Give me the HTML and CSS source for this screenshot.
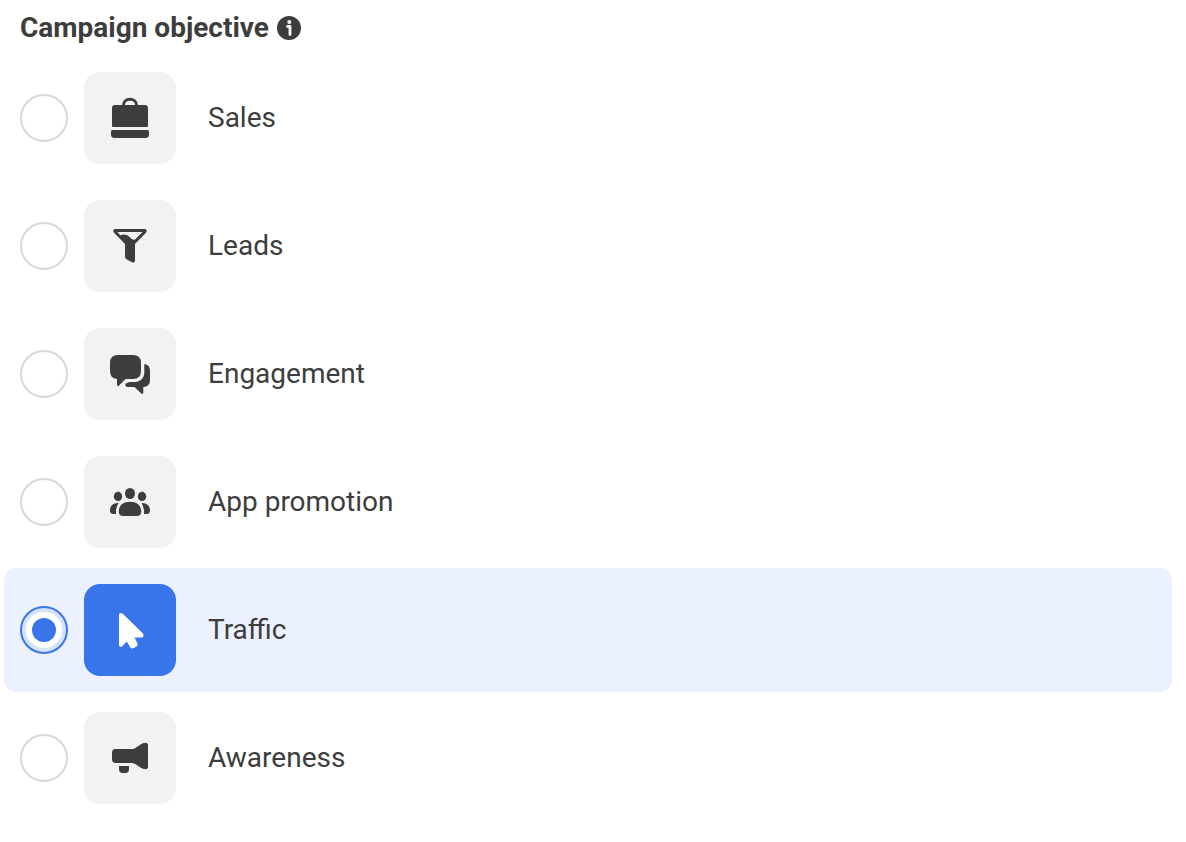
FILE: index.html
```html
<!DOCTYPE html>
<html lang="en">
<head>
<meta charset="utf-8">
<meta name="viewport" content="width=device-width, initial-scale=1">
<title>Campaign objective</title>
<link rel="stylesheet" href="styles.css">
</head>
<body>
<fieldset class="objectives">
  <legend class="title">Campaign objective
    <button class="info" type="button" aria-label="About campaign objectives">
      <svg viewBox="0 0 24 24" aria-hidden="true"><circle cx="12" cy="12" r="12" fill="#3d3d3d"/><circle cx="12.300" cy="6" r="2" fill="#fff"/><path d="M10.500 10.500H13V18.500" fill="none" stroke="#fff" stroke-width="2.800" stroke-linecap="round" stroke-linejoin="round"/></svg>
    </button>
  </legend>
  <div class="list">
    <label class="option">
      <input class="radio" type="radio" name="objective" value="sales">
      <span class="tile"><svg class="icon" viewBox="0 0 60 60" aria-hidden="true"><path d="M15 17H45Q48 17 48 20V38Q48 39 47 39H13Q12 39 12 38V20Q12 17 15 17ZM12.500 42H47.500Q49 42 49 43.500V46.500Q49 50 45.500 50H14.500Q11 50 11 46.500V43.500Q11 42 12.500 42Z"/><path d="M23.300 18C23.300 9 36.700 9 36.700 18" fill="none" stroke="currentColor" stroke-width="3"/></svg></span>
      <span class="name">Sales</span>
    </label>
    <label class="option">
      <input class="radio" type="radio" name="objective" value="leads">
      <span class="tile"><svg class="icon" viewBox="0 0 60 60" aria-hidden="true"><path fill-rule="evenodd" d="M15 13H45Q46.700 13 46.700 14.800Q46.700 16 45.700 17L35 28V44Q35 47.500 32 46.300L26.500 43.300Q25 42.400 25 40.500V28L14.300 17Q13.300 16 13.300 14.800Q13.300 13 15 13ZM17.300 16L20.300 19.200C24 18 27 18.500 29.500 21C31.500 23.200 33.500 24.600 35.300 23.200L42.500 16Z"/></svg></span>
      <span class="name">Leads</span>
    </label>
    <label class="option">
      <input class="radio" type="radio" name="objective" value="engagement">
      <span class="tile"><svg class="icon" viewBox="0 0 60 60" aria-hidden="true"><path d="M18 11H33Q41 11 41 19V27Q41 35 33 35H25.500L19 41.500Q17 43 17 40.500V35Q10 34.500 10 27V19Q10 11 18 11Z"/><path d="M44.300 20Q50 20.500 50 27V36Q50 42.700 43.300 43V48.500Q43.300 51 41 49.300L34.500 43H27.500Q26 43 25.300 41.300Q25 39.500 27 39L29.500 38H35C41 37.500 44.300 34 44.300 28Z"/></svg></span>
      <span class="name">Engagement</span>
    </label>
    <label class="option">
      <input class="radio" type="radio" name="objective" value="app-promotion">
      <span class="tile"><svg class="icon" viewBox="0 0 60 60" aria-hidden="true"><ellipse cx="30" cy="21.500" rx="5" ry="5.600"/><ellipse cx="18" cy="24.400" rx="4.200" ry="4.600"/><ellipse cx="42" cy="24.400" rx="4.200" ry="4.600"/><path d="M30 29.800C37 29.800 41.200 33.500 41.200 39.500Q41.200 44 36.500 44H23.500Q18.800 44 18.800 39.500C18.800 33.500 23 29.800 30 29.800ZM18.500 31Q15.500 36 16 42H13.500Q10 42 10 38.500C10 34 13 30.700 18.500 31ZM41.500 31Q44.500 36 44 42H46.500Q50 42 50 38.500C50 34 47 30.700 41.500 31Z"/></svg></span>
      <span class="name">App promotion</span>
    </label>
    <label class="option">
      <input class="radio" type="radio" name="objective" value="traffic" checked>
      <span class="tile"><svg class="icon" viewBox="0 0 60 60" aria-hidden="true"><path d="M19 15C19 12.700 21.300 12.200 23 14L42.500 33Q44.500 35 43 37Q42.500 37.600 41 37.600H34.500L37.500 43.500Q38.500 45.500 36.500 46.600L33 48.300Q31 49 30 47L26.800 41.500L22.500 46Q19 48.300 19 44.500Z"/></svg></span>
      <span class="name">Traffic</span>
    </label>
    <label class="option">
      <input class="radio" type="radio" name="objective" value="awareness">
      <span class="tile"><svg class="icon" viewBox="0 0 60 60" aria-hidden="true"><path d="M15.500 21H32C35.500 21 38.500 17 43 15.200C46 14.200 48 14.500 48 17.500V38.500C48 41.500 46 41.500 43 40.700C38.500 39 35.500 35 32 35H15.500Q12 35 12 31V25Q12 21 15.500 21ZM19 38H29V41Q29 45 25.500 45H22.500Q19 45 19 41Z"/></svg></span>
      <span class="name">Awareness</span>
    </label>
  </div>
</fieldset>
</body>
</html>
```
FILE: styles.css
```css
* {
  box-sizing: border-box;
}

body {
  margin: 0;
  background: #fff;
  color: #3d3d3d;
  font-family: Roboto, "Liberation Sans", sans-serif;
  font-size: 28px;
  line-height: 32px;
}

.objectives {
  margin: 0;
  padding: 0 14px 0 4px;
  border: 0;
  min-width: 0;
}

.title {
  display: flex;
  align-items: center;
  gap: 8px;
  padding: 12px 16px;
  font-weight: 700;
}

.info {
  display: flex;
  width: 24px;
  height: 24px;
  padding: 0;
  border: 0;
  border-radius: 50%;
  background: none;
  cursor: pointer;
}

.info svg {
  width: 100%;
  height: 100%;
}

.list {
  display: flex;
  flex-direction: column;
  gap: 4px;
}

.option {
  display: flex;
  align-items: center;
  gap: 16px;
  padding: 16px;
  border-radius: 12px;
  cursor: pointer;
}

.option:has(.radio:checked) {
  background: #ebf1fe;
}

.radio {
  appearance: none;
  display: grid;
  place-items: center;
  flex: none;
  width: 48px;
  height: 48px;
  margin: 0;
  border: 2px solid #d8d8d8;
  border-radius: 50%;
  background: #fff;
}

.radio:checked {
  border-color: #3975ea;
  background: #d7e3fb;
}

.radio:checked::before {
  content: "";
  width: 24px;
  height: 24px;
  border-radius: 50%;
  background: #3975ea;
  box-shadow: 0 0 0 6px #fff;
}

.tile {
  display: flex;
  flex: none;
  align-items: center;
  justify-content: center;
  width: 92px;
  height: 92px;
  border-radius: 16px;
  background: #f2f2f2;
}

.radio:checked + .tile {
  background: #3975ea;
  color: #fff;
}

.icon {
  width: 60px;
  height: 60px;
  fill: currentColor;
}

.name {
  padding-left: 16px;
}
```
